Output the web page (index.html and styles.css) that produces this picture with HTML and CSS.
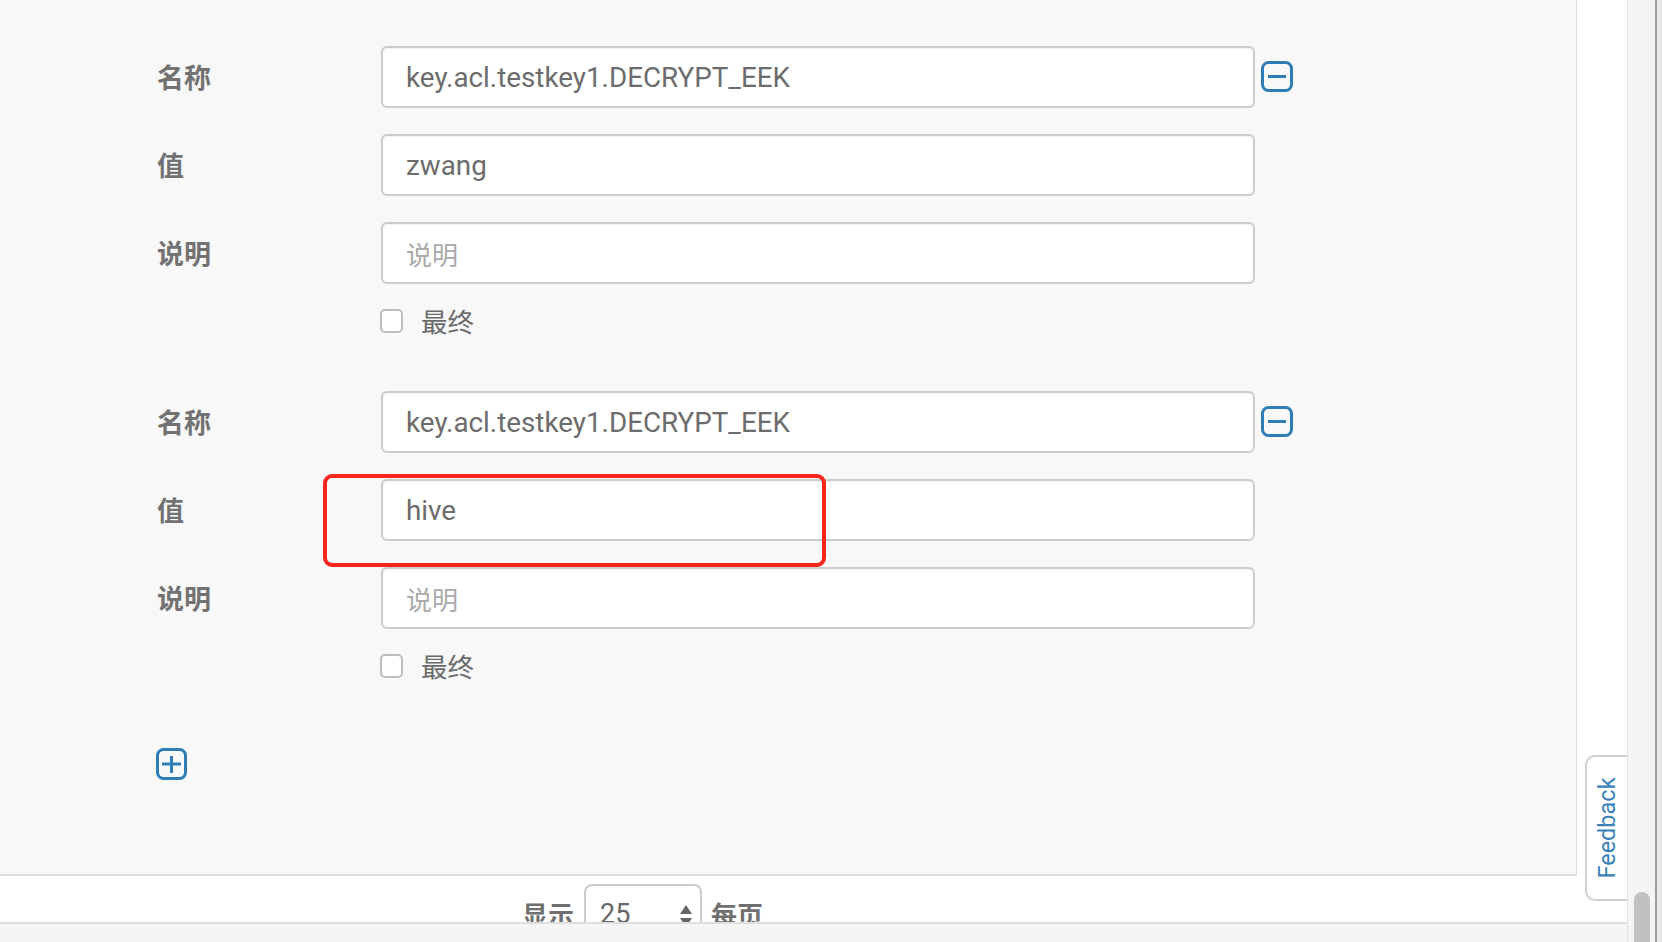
FILE: index.html
```html
<!DOCTYPE html>
<html lang="zh">
<head>
<meta charset="utf-8">
<title>Properties</title>
<link rel="stylesheet" href="styles.css">
</head>
<body>
<div class="app">
  <div class="content">
    <div class="panel">
      <div class="group">
        <div class="fields">
          <div class="row">
            <span class="label">名称</span>
            <div class="input"><span class="val">key.acl.testkey1.DECRYPT_EEK</span></div>
            <svg class="icon" width="32" height="31" viewBox="0 0 32 31"><rect x="1.5" y="1.5" width="29" height="28" rx="6" fill="none" stroke="#2e7db5" stroke-width="3"/><line x1="7" y1="15.5" x2="25" y2="15.5" stroke="#2e7db5" stroke-width="3"/></svg>
          </div>
          <div class="row">
            <span class="label">值</span>
            <div class="input"><span class="val">zwang</span></div>
          </div>
          <div class="row">
            <span class="label">说明</span>
            <div class="input"><span class="ph">说明</span></div>
          </div>
        </div>
        <div class="check-row"><span class="checkbox"></span><span class="check-label">最终</span></div>
      </div>

      <div class="group">
        <div class="fields">
          <div class="row">
            <span class="label">名称</span>
            <div class="input"><span class="val">key.acl.testkey1.DECRYPT_EEK</span></div>
            <svg class="icon" width="32" height="31" viewBox="0 0 32 31"><rect x="1.5" y="1.5" width="29" height="28" rx="6" fill="none" stroke="#2e7db5" stroke-width="3"/><line x1="7" y1="15.5" x2="25" y2="15.5" stroke="#2e7db5" stroke-width="3"/></svg>
          </div>
          <div class="row">
            <span class="label">值</span>
            <div class="input"><span class="val">hive</span></div>
          </div>
          <div class="row">
            <span class="label">说明</span>
            <div class="input"><span class="ph">说明</span></div>
          </div>
        </div>
        <div class="check-row"><span class="checkbox"></span><span class="check-label">最终</span></div>
      </div>

      <svg class="add-icon" width="31" height="32" viewBox="0 0 31 32"><rect x="1.5" y="1.5" width="28" height="29" rx="6" fill="none" stroke="#2e7db5" stroke-width="3"/><line x1="6" y1="16" x2="25" y2="16" stroke="#2e7db5" stroke-width="3"/><line x1="15.5" y1="8" x2="15.5" y2="25" stroke="#2e7db5" stroke-width="3"/></svg>
    </div>

    <div class="pager">
      <span class="pager-text">显示</span>
      <div class="select"><span class="sel-val">25</span>
        <svg class="sel-arrows" width="12" height="22" viewBox="0 0 12 22"><polygon points="6,0 12,9 0,9" fill="#666"/><polygon points="0,13 12,13 6,22" fill="#666"/></svg>
      </div>
      <span class="pager-text">每页</span>
    </div>
    <div class="foot"></div>
  </div>
  <div class="side">
    <div class="track"></div>
    <div class="edge"></div>
  </div>
</div>

<div class="annotation"></div>
<div class="feedback"><span class="feedback-text">Feedback</span></div>
<div class="thumb"></div>
</body>
</html>
```

FILE: styles.css
```css
html, body {
  margin: 0;
  padding: 0;
  width: 1662px;
  height: 942px;
  overflow: hidden;
  font-family: Roboto, "Noto Sans CJK SC", sans-serif;
}

.app {
  display: flex;
  width: 1662px;
  height: 942px;
}

.content {
  width: 1627px;
  display: flex;
  flex-direction: column;
  background: #ffffff;
}

.panel {
  width: 1577px;
  height: 876px;
  box-sizing: border-box;
  background: #f8f8f8;
  border-right: 1px solid #dedede;
  border-bottom: 2px solid #dedede;
  padding: 46px 0 0 157px;
  display: flex;
  flex-direction: column;
}

.group {
  display: flex;
  flex-direction: column;
}

.group + .group {
  margin-top: 58px;
}

.fields {
  display: flex;
  flex-direction: column;
  gap: 26px;
}

.row {
  display: flex;
  align-items: center;
  height: 62px;
}

.label {
  width: 224px;
  font-family: "Noto Sans CJK SC", sans-serif;
  font-size: 27px;
  font-weight: 700;
  color: #727272;
  margin-top: -2px;
}

.input {
  width: 874px;
  height: 62px;
  box-sizing: border-box;
  border: 2px solid #cccccc;
  border-radius: 6px;
  background: #ffffff;
  box-shadow: inset 0 1px 2px rgba(0,0,0,0.06);
  padding: 0 23px;
  display: flex;
  align-items: center;
  font-size: 27.8px;
}

.val {
  color: #6c6c6c;
}

.ph {
  color: #aaaaaa;
  font-family: "Noto Sans CJK SC", sans-serif;
  font-size: 26px;
}

.icon {
  margin-left: 6px;
  margin-top: -2px;
}

.check-row {
  margin-top: 25px;
  margin-left: 223px;
  height: 24px;
  display: flex;
  align-items: center;
}

.checkbox {
  width: 23px;
  height: 24px;
  box-sizing: border-box;
  border: 2px solid #bdbdbd;
  border-radius: 5px;
  background: #ffffff;
}

.check-label {
  margin-left: 18px;
  font-family: "Noto Sans CJK SC", sans-serif;
  font-size: 26.5px;
  color: #6b6b6b;
  line-height: 24px;
  margin-top: 0;
}

.add-icon {
  margin-top: 70px;
  margin-left: -1px;
}

.pager {
  box-sizing: content-box;
  border-bottom: 2px solid #dedede;
  overflow: hidden;
  display: flex;
  align-items: flex-start;
  padding-left: 522px;
  padding-top: 8px;
  height: 38px;
}

.pager-text {
  font-family: "Noto Sans CJK SC", sans-serif;
  font-size: 26px;
  font-weight: 700;
  color: #707070;
  line-height: 60px;
}

.select {
  width: 118px;
  height: 60px;
  box-sizing: border-box;
  border: 2px solid #cccccc;
  border-radius: 8px;
  margin: 0 9px 0 10px;
  display: flex;
  align-items: center;
  padding-left: 14px;
  flex-shrink: 0;
}

.sel-val {
  font-size: 27px;
  color: #666666;
  flex: 1;
}

.sel-arrows {
  margin-right: 8px;
  margin-top: 4px;
}

.foot {
  flex: 1;
  background: #f5f5f5;
}

.side {
  flex: 1;
  display: flex;
}

.track {
  width: 27px;
  background: #f4f4f4;
  border-left: 1px solid #e2e2e2;
}

.edge {
  width: 2px;
  background: #9e9e9e;
}

.side::after {
  content: "";
  flex: 1;
  background: #e9e9e9;
}

.annotation {
  position: absolute;
  left: 323px;
  top: 474px;
  width: 503px;
  height: 93px;
  box-sizing: border-box;
  border: 4px solid #f5261b;
  border-radius: 9px;
}

.feedback {
  position: absolute;
  left: 1585px;
  top: 755px;
  width: 42px;
  height: 146px;
  box-sizing: border-box;
  background: #ffffff;
  border: 2px solid #cfcfcf;
  border-right: none;
  border-radius: 10px 0 0 10px;
  display: flex;
  align-items: center;
  justify-content: center;
}

.feedback-text {
  transform: rotate(-90deg);
  font-family: Roboto, sans-serif;
  font-size: 23.5px;
  color: #3a80b8;
  white-space: nowrap;
}

.thumb {
  position: absolute;
  left: 1634px;
  top: 892px;
  width: 16px;
  height: 60px;
  border-radius: 8px;
  background: #c1c1c1;
}
```
